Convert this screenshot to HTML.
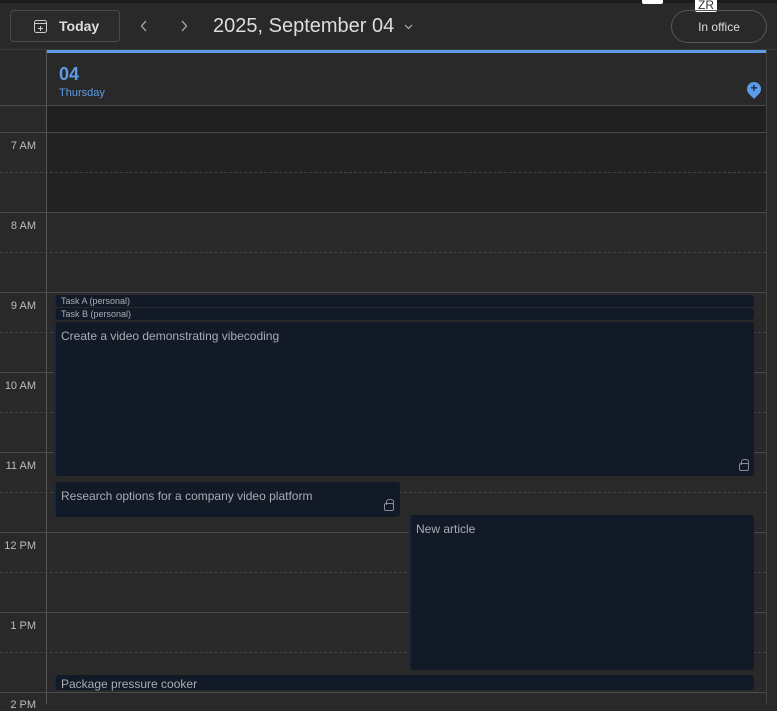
<!DOCTYPE html>
<html><head><style>
*{margin:0;padding:0;box-sizing:border-box}
body{width:777px;height:704px;overflow:hidden;background:#292929;font-family:"Liberation Sans","DejaVu Sans",sans-serif;position:relative;color:#ddd}
.abs{position:absolute}
.hl{position:absolute;left:0;width:766px;height:1px;background:#4a4a4a}
.dl{position:absolute;left:0;width:766px;border-top:1px dashed #444}
.lbl{position:absolute;left:0;width:36px;text-align:right;font-size:11px;color:#bbb}
.ev{position:absolute;background:#131a27;border-radius:3px;border-left:2px solid #1c2738;color:#a9acb2;font-size:12px;padding-left:5px}
.lock{position:absolute;width:10px;height:8px;border:1px solid #8a8d92;border-radius:2px}
.lock:before{content:"";position:absolute;left:1px;top:-5px;width:6px;height:5px;border:1px solid #8a8d92;border-bottom:none;border-radius:3px 3px 0 0}
</style></head><body>
<div class="abs" style="left:0;top:0;width:777px;height:3px;background:#1b1b1b"></div>
<div class="abs" style="left:642px;top:0;width:21px;height:4px;background:#fff;border-radius:0 0 2px 2px"></div>
<div class="abs" style="left:695px;top:0;width:22px;height:12px;background:#fff;color:#333;font-size:12px;line-height:11px;text-align:center;border-radius:0 0 2px 2px">ZR</div>
<div class="abs" style="left:10px;top:10px;width:110px;height:32px;border:1px solid #4a4a4a;border-radius:4px;background:#2b2b2b"></div>
<svg class="abs" style="left:33px;top:19px" width="15" height="15" viewBox="0 0 15 15"><rect x="1.5" y="1.5" width="12" height="12" rx="2" fill="none" stroke="#ccc"/><line x1="1.5" y1="4.5" x2="13.5" y2="4.5" stroke="#ccc"/><line x1="7.5" y1="7" x2="7.5" y2="12" stroke="#ccc"/><line x1="5" y1="9.5" x2="10" y2="9.5" stroke="#ccc"/></svg>
<div class="abs" style="left:59px;top:18px;font-size:14px;font-weight:bold;color:#ddd">Today</div>
<svg class="abs" style="left:140px;top:20px" width="8" height="12"><path d="M6 1L1.5 6L6 11" fill="none" stroke="#bbb" stroke-width="1.1"/></svg>
<svg class="abs" style="left:180px;top:20px" width="8" height="12"><path d="M2 1L6.5 6L2 11" fill="none" stroke="#bbb" stroke-width="1.1"/></svg>
<div class="abs" style="left:213px;top:15px;font-size:20px;color:#ddd">2025, September 04</div>
<svg class="abs" style="left:404px;top:24px" width="9" height="6"><path d="M1 1l3.5 3.5L8 1" fill="none" stroke="#bbb"/></svg>
<div class="abs" style="left:671px;top:10px;width:96px;height:33px;border:1px solid #555;border-radius:17px"></div>
<div class="abs" style="left:671px;top:20px;width:96px;text-align:center;font-size:12px;color:#ddd">In office</div>
<div class="abs" style="left:0;top:49px;width:777px;height:1px;background:#3a3a3a"></div>
<div class="abs" style="left:47px;top:50px;width:719px;height:3px;background:#5b9be8"></div>
<div class="abs" style="left:46px;top:50px;width:1px;height:654px;background:#555"></div>
<div class="abs" style="left:766px;top:50px;width:1px;height:654px;background:#444"></div>
<div class="abs" style="left:59px;top:64px;font-size:18px;font-weight:bold;color:#5b9be8">04</div>
<div class="abs" style="left:59px;top:87px;font-size:11px;color:#5b9be8">Thursday</div>
<div class="abs" style="left:747px;top:82px;width:14px;height:14px;border-radius:50% 50% 50% 0;transform:rotate(-45deg);background:#5b9be8"></div>
<div class="abs" style="left:747px;top:81px;width:14px;text-align:center;font-size:12px;font-weight:bold;color:#1a2a44">+</div>
<div class="hl" style="top:105px"></div>
<div class="abs" style="left:47px;top:106px;width:719px;height:26px;background:#202020"></div>
<div class="abs" style="left:47px;top:133px;width:719px;height:79px;background:#222"></div>
<div class="hl" style="top:132px"></div><div class="dl" style="top:172px"></div>
<div class="hl" style="top:212px"></div><div class="dl" style="top:252px"></div>
<div class="hl" style="top:292px"></div><div class="dl" style="top:332px"></div>
<div class="hl" style="top:372px"></div><div class="dl" style="top:412px"></div>
<div class="hl" style="top:452px"></div><div class="dl" style="top:492px"></div>
<div class="hl" style="top:532px"></div><div class="dl" style="top:572px"></div>
<div class="hl" style="top:612px"></div><div class="dl" style="top:652px"></div>
<div class="hl" style="top:692px"></div>
<div class="lbl" style="top:140px">7 AM</div>
<div class="lbl" style="top:220px">8 AM</div>
<div class="lbl" style="top:300px">9 AM</div>
<div class="lbl" style="top:380px">10 AM</div>
<div class="lbl" style="top:460px">11 AM</div>
<div class="lbl" style="top:540px">12 PM</div>
<div class="lbl" style="top:620px">1 PM</div>
<div class="lbl" style="top:699px">2 PM</div>
<div class="ev" style="left:54px;top:295px;width:700px;height:12px;font-size:9px;line-height:13px">Task A (personal)</div>
<div class="ev" style="left:54px;top:308px;width:700px;height:12px;font-size:9px;line-height:13px">Task B (personal)</div>
<div class="ev" style="left:54px;top:322px;width:700px;height:154px;padding-top:7px">Create a video demonstrating vibecoding<div class="lock" style="right:5px;bottom:5px"></div></div>
<div class="ev" style="left:54px;top:482px;width:346px;height:35px;padding-top:7px">Research options for a company video platform<div class="lock" style="right:6px;bottom:6px"></div></div>
<div class="ev" style="left:409px;top:515px;width:345px;height:155px;padding-top:7px">New article</div>
<div class="ev" style="left:54px;top:675px;width:700px;height:15px;line-height:18px">Package pressure cooker</div>
</body></html>
